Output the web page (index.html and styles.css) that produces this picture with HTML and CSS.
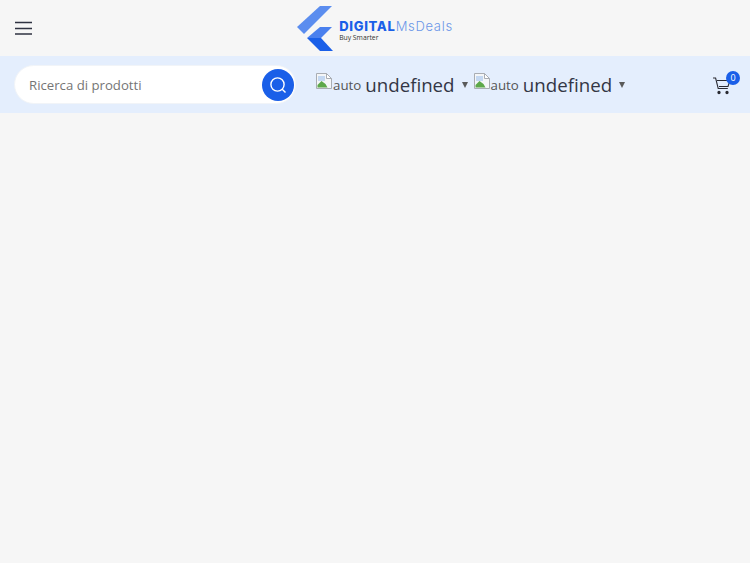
FILE: index.html
```html
<!DOCTYPE html>
<html lang="it">
<head>
    <meta charset="UTF-8">
    <meta name="viewport" content="width=device-width, initial-scale=1.0">
    <title>DigitalMsDeals</title>
    <link rel="stylesheet" href="styles.css">
</head>
<body>
    <header class="top-bar">
        <button class="menu-btn" aria-label="Menu">
            <svg width="18" height="14" viewBox="0 0 18 14">
                <path d="M0 1.5h17M0 7.5h17M0 13h17" stroke="#2f3342" stroke-width="1.6" fill="none"/>
            </svg>
        </button>
        <a class="logo" href="#">
            <svg class="logo-mark" width="36" height="45" viewBox="0 0 36 45">
                <polygon points="23,0 35,0 7,28 0,21" fill="#5b8def"/>
                <polygon points="23,21 35,21 24,32 10,32" fill="#4a80ee"/>
                <polygon points="10,32 24,32 36,45 23,45" fill="#1a5fe8"/>
            </svg>
            <span class="logo-text">
                <span class="logo-name"><b>DIGITAL</b>MsDeals</span>
                <span class="logo-tag">Buy Smarter</span>
            </span>
        </a>
    </header>

    <section class="search-bar">
        <form class="search">
            <input type="text" placeholder="Ricerca di prodotti">
            <button type="button" class="search-btn" aria-label="Cerca">
                <svg width="18" height="18" viewBox="0 0 18 18" fill="none" stroke="#fff" stroke-width="1.4">
                    <circle cx="8.5" cy="8.5" r="6.6"/>
                    <path d="M13.2 13.2l3.3 3.3"/>
                </svg>
            </button>
        </form>

        <div class="select">
            <span class="flag">
                <svg class="broken" width="16" height="16" viewBox="0 0 16 16">
                    <path d="M.5.5h10l5 5v10H.5z" fill="#f4f6f8" stroke="#a9adb3"/>
                    <path d="M10.5.5v5h5z" fill="#fff" stroke="#a9adb3"/>
                    <path d="M2 3h7v5H2z" fill="#c4d8f2"/>
                    <path d="M1.5 14.5V12l4-4 4 3 2 3.5z" fill="#5da84a"/>
                </svg><span class="flag-alt">auto</span>
            </span>
            <span class="select-label">undefined</span>
            <span class="caret"></span>
        </div>
        <div class="select">
            <span class="flag">
                <svg class="broken" width="16" height="16" viewBox="0 0 16 16">
                    <path d="M.5.5h10l5 5v10H.5z" fill="#f4f6f8" stroke="#a9adb3"/>
                    <path d="M10.5.5v5h5z" fill="#fff" stroke="#a9adb3"/>
                    <path d="M2 3h7v5H2z" fill="#c4d8f2"/>
                    <path d="M1.5 14.5V12l4-4 4 3 2 3.5z" fill="#5da84a"/>
                </svg><span class="flag-alt">auto</span>
            </span>
            <span class="select-label">undefined</span>
            <span class="caret"></span>
        </div>

        <a class="cart" href="#" aria-label="Carrello">
            <svg width="20" height="19" viewBox="0 0 20 19" fill="none" stroke="#2b2b33" stroke-width="1.1">
                <path d="M1 2h2.6l2.6 10.5h9.6"/>
                <path d="M5 4.5h13l-2 6H7"/>
                <circle cx="7" cy="16.5" r="1.1" fill="#2b2b33"/>
                <circle cx="15" cy="16.5" r="1.1" fill="#2b2b33"/>
            </svg>
            <span class="badge">0</span>
        </a>
    </section>
</body>
</html>
```

FILE: styles.css
```css
body {
    margin: 0;
    min-height: 563px;
    background: #f6f6f6;
    font-family: "Open Sans", sans-serif;
    color: #333645;
}
.top-bar {
    position: relative;
    display: flex;
    align-items: center;
    justify-content: center;
    height: 56px;
}
.menu-btn {
    position: absolute;
    left: 15px;
    top: 21px;
    padding: 0;
    border: 0;
    background: none;
    line-height: 0;
}
.logo {
    display: flex;
    align-items: center;
    gap: 6px;
    text-decoration: none;
}
.logo-text {
    display: flex;
    flex-direction: column;
    margin-top: 3px;
}
.logo-name {
    font-family: "Inter", sans-serif;
    font-size: 13px;
    line-height: 15px;
    letter-spacing: .7px;
    color: #6b96e8;
    font-weight: 300;
}
.logo-name b {
    color: #1a5fe8;
    font-weight: 800;
}
.logo-tag {
    font-size: 6.8px;
    line-height: 7px;
    color: #333;
}
.search-bar {
    display: flex;
    align-items: center;
    height: 57px;
    padding-left: 14px;
    background: #e4eefd;
}
.search {
    display: flex;
    align-items: center;
    box-sizing: border-box;
    width: 282px;
    height: 39px;
    margin-right: 20px;
    padding-right: 1px;
    background: #fff;
    border: 1px solid #f1f4f8;
    border-radius: 20px;
}
.search input {
    flex: 1;
    min-width: 0;
    padding: 0 0 0 14px;
    border: 0;
    outline: 0;
    background: none;
    font-family: inherit;
    font-size: 13.2px;
}
.search input::placeholder {
    color: #757575;
    opacity: 1;
}
.search-btn {
    display: flex;
    align-items: center;
    justify-content: center;
    width: 32px;
    height: 32px;
    padding: 0;
    border: 0;
    border-radius: 50%;
    background: #1a5fe8;
}
.select {
    display: flex;
    align-items: center;
    margin-right: 6px;
}
.flag {
    display: flex;
    align-items: flex-end;
    margin-bottom: 8px;
    color: #555;
}
.flag-alt {
    position: relative;
    top: 4px;
    margin-left: 1px;
    font-size: 13.3px;
    line-height: 16px;
}
.broken {
    display: block;
}
.select-label {
    margin-left: 4px;
    font-size: 18.7px;
    line-height: 28px;
}
.caret {
    width: 0;
    height: 0;
    margin-left: 7px;
    border-left: 3.5px solid transparent;
    border-right: 3.5px solid transparent;
    border-top: 6px solid #5a5a5a;
}
.cart {
    position: relative;
    margin-left: auto;
    margin-right: 18px;
    margin-top: 1px;
    line-height: 0;
}
.badge {
    position: absolute;
    top: -5px;
    right: -8px;
    width: 14px;
    height: 14px;
    border-radius: 50%;
    background: #1a5fe8;
    color: #fff;
    font-size: 9px;
    line-height: 14px;
    text-align: center;
}
```
